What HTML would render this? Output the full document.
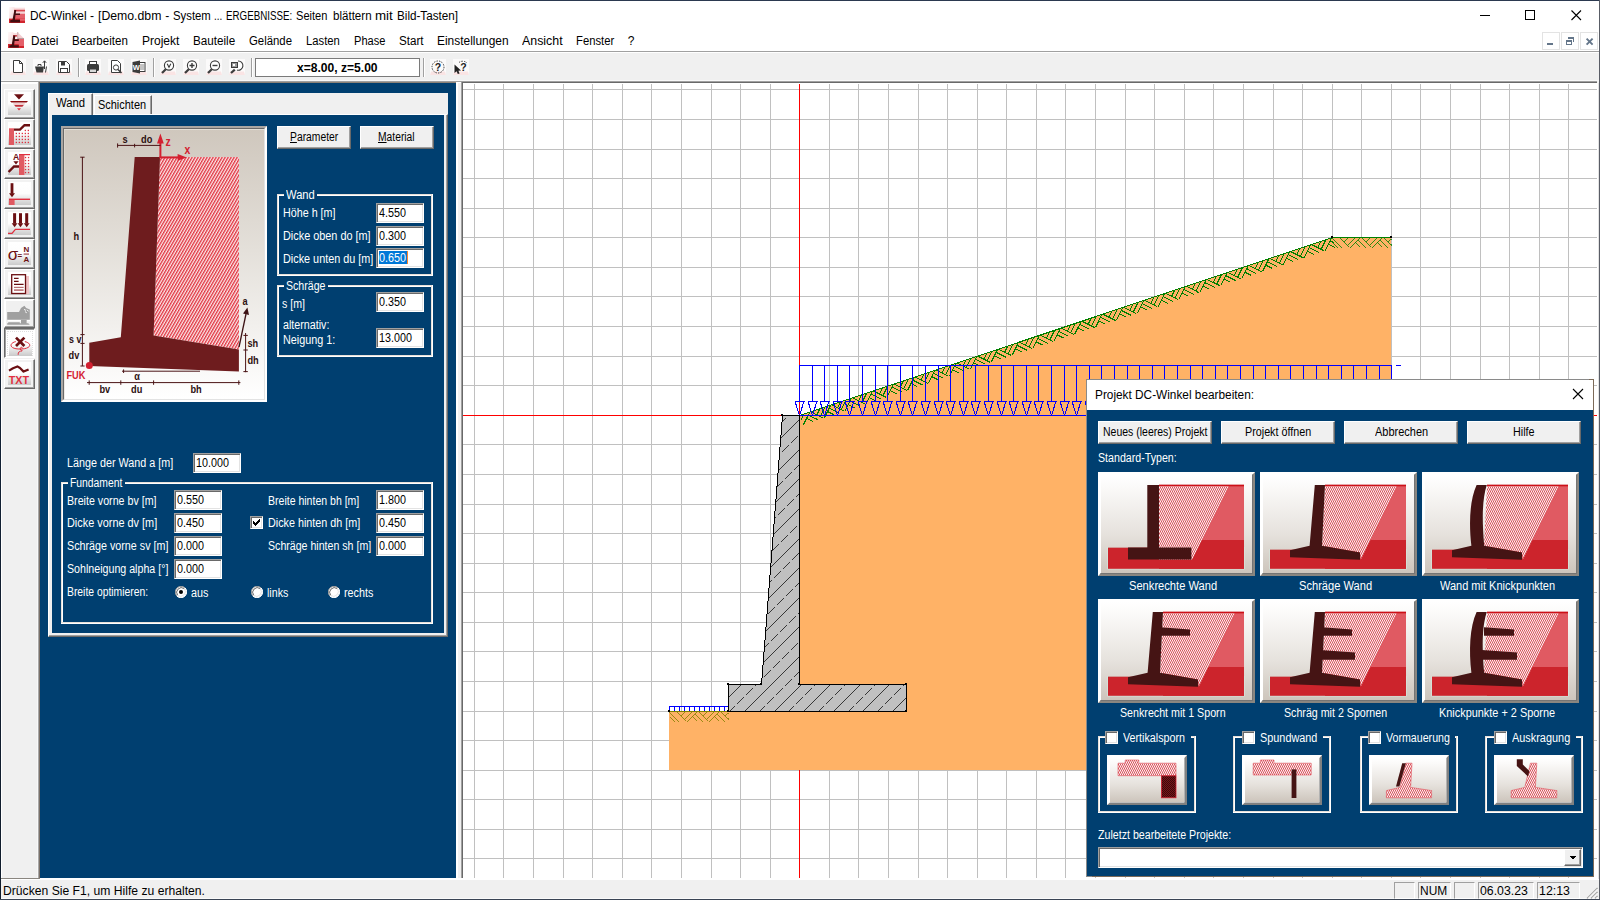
<!DOCTYPE html>
<html lang="de"><head><meta charset="utf-8"><title>DC-Winkel</title>
<style>
html,body{margin:0;padding:0}
body{width:1600px;height:900px;position:relative;overflow:hidden;background:#f0f0f0;font-family:"Liberation Sans",sans-serif;font-size:11px;color:#000}
div,span.t,svg{position:absolute}
span.t{white-space:pre;display:block;transform-origin:0 0}
svg{display:block;overflow:hidden}
.sunk{border:1px solid;border-color:#a0a0a0 #fff #fff #a0a0a0;padding:1px;box-shadow:inset 1px 1px 0 #696969,inset -1px -1px 0 #e3e3e3}
.rais{border:1px solid;border-color:#fff #696969 #696969 #fff;padding:1px;box-shadow:inset -1px -1px 0 #a0a0a0}
.etch{border:1px solid #fff;box-shadow:inset 1px 1px 0 rgba(160,160,160,.0)}
.blue{background:#003f70}
.w{color:#fff}
</style></head>
<body>
<div style="left:0px;top:0px;width:1600px;height:51px;background:#fff"></div><div style="left:0px;top:0px;width:1600px;height:1px;background:#2b3950"></div><svg style="left:9px;top:7px" width="16" height="16" viewBox="0 0 16 16"><defs><linearGradient id="ig0" x1="0" y1="0" x2="1" y2="1"><stop offset="0" stop-color="#fffafa"/><stop offset="1" stop-color="#f6d4d6"/></linearGradient></defs><rect x="0" y="0" width="5.4" height="12" fill="url(#ig0)"/><rect x="5" y="0.7" width="11" height="2" fill="#f9dfe0"/><rect x="5" y="2.7" width="11" height="2" fill="#d9464f"/><rect x="6" y="4.7" width="10" height="2" fill="#f4d3d5"/><rect x="6" y="6.7" width="10" height="6" fill="#e4606a"/><rect x="0" y="11.6" width="16" height="4.4" fill="#d0242c"/><rect x="11" y="11.6" width="5" height="2.2" fill="#e4606a"/><path d="M5.4 3H7.3L6.7 6.4H11V8H6.5L5.9 12.8H11V15.4H1.2V13.2L3.5 12.8Z" fill="#420d10"/></svg><span class="t" style="left:30.3px;top:8px;font-size:12px;line-height:16px;color:#000;transform:scaleX(0.9870);">DC-Winkel</span><span class="t" style="left:89.9px;top:8px;font-size:12px;line-height:16px;color:#000;">-</span><span class="t" style="left:98.3px;top:8px;font-size:12px;line-height:16px;color:#000;transform:scaleX(1.0221);">[Demo.dbm</span><span class="t" style="left:165.3px;top:8px;font-size:12px;line-height:16px;color:#000;">-</span><span class="t" style="left:172.7px;top:8px;font-size:12px;line-height:16px;color:#000;transform:scaleX(0.9446);">System</span><span class="t" style="left:214.3px;top:8px;font-size:12px;line-height:16px;color:#000;transform:scaleX(0.8187);">...</span><span class="t" style="left:226.3px;top:8px;font-size:12px;line-height:16px;color:#000;transform:scaleX(0.8137);">ERGEBNISSE:</span><span class="t" style="left:295.9px;top:8px;font-size:12px;line-height:16px;color:#000;transform:scaleX(0.9227);">Seiten</span><span class="t" style="left:332.7px;top:8px;font-size:12px;line-height:16px;color:#000;transform:scaleX(0.9642);">blättern</span><span class="t" style="left:375.1px;top:8px;font-size:12px;line-height:16px;color:#000;transform:scaleX(1.1125);">mit</span><span class="t" style="left:396.5px;top:8px;font-size:12px;line-height:16px;color:#000;transform:scaleX(0.9728);">Bild-Tasten]</span><svg style="left:1470px;top:1px" width="128" height="30" viewBox="0 0 128 30" shape-rendering="crispEdges"><rect x="10" y="14" width="10" height="1" fill="#000"/><rect x="55.5" y="9.5" width="9" height="9" fill="none" stroke="#000"/><path d="M101.5 9.5L111 19M111 9.5L101.5 19" stroke="#000" stroke-width="1.1" fill="none" shape-rendering="auto"/></svg><svg style="left:8px;top:32px" width="16" height="16" viewBox="0 0 16 16"><defs><linearGradient id="ig1" x1="0" y1="0" x2="1" y2="1"><stop offset="0" stop-color="#fffafa"/><stop offset="1" stop-color="#f6d4d6"/></linearGradient></defs><rect x="0" y="0" width="5.4" height="12" fill="url(#ig1)"/><rect x="5" y="1" width="4.6" height="2.2" fill="#f9dfe0"/><rect x="5" y="3" width="4.6" height="1.8" fill="#d9464f"/><rect x="6.6" y="4.8" width="3" height="2.2" fill="#fdf4f4"/><path d="M9.4 0L16 6.6H9.4Z" fill="#f3cdd0"/><rect x="9.3" y="0" width="0.9" height="6.4" fill="#c8a8ac"/><rect x="9.4" y="6" width="6.6" height="1" fill="#b89c9e"/><rect x="6" y="7" width="10" height="6" fill="#e4606a"/><rect x="0" y="12" width="16" height="4" fill="#d0242c"/><rect x="10.8" y="12" width="5.2" height="2" fill="#e4606a"/><path d="M5.3 3.6H7.4L6.9 7.2H10.8V8.9H6.6L6.1 13.2H10.8V15.4H1.4V13.4L3.7 13Z" fill="#420d10"/></svg><span class="t" style="left:30.7px;top:33px;font-size:12px;line-height:16px;color:#000;transform:scaleX(0.9780);">Datei</span><span class="t" style="left:71.9px;top:33px;font-size:12px;line-height:16px;color:#000;transform:scaleX(0.9613);">Bearbeiten</span><span class="t" style="left:141.5px;top:33px;font-size:12px;line-height:16px;color:#000;transform:scaleX(1.0011);">Projekt</span><span class="t" style="left:193.1px;top:33px;font-size:12px;line-height:16px;color:#000;transform:scaleX(0.9729);">Bauteile</span><span class="t" style="left:248.9px;top:33px;font-size:12px;line-height:16px;color:#000;transform:scaleX(0.9477);">Gelände</span><span class="t" style="left:305.9px;top:33px;font-size:12px;line-height:16px;color:#000;transform:scaleX(0.9381);">Lasten</span><span class="t" style="left:353.7px;top:33px;font-size:12px;line-height:16px;color:#000;transform:scaleX(0.9227);">Phase</span><span class="t" style="left:398.5px;top:33px;font-size:12px;line-height:16px;color:#000;transform:scaleX(0.9707);">Start</span><span class="t" style="left:436.5px;top:33px;font-size:12px;line-height:16px;color:#000;transform:scaleX(0.9936);">Einstellungen</span><span class="t" style="left:521.5px;top:33px;font-size:12px;line-height:16px;color:#000;transform:scaleX(1.0315);">Ansicht</span><span class="t" style="left:575.7px;top:33px;font-size:12px;line-height:16px;color:#000;transform:scaleX(0.9389);">Fenster</span><span class="t" style="left:627.7px;top:33px;font-size:12px;line-height:16px;color:#000;">?</span><div style="left:1542px;top:32px;width:16px;height:16px;background:#fff;border:1px solid #e3e3e3"></div><div style="left:1561px;top:32px;width:16px;height:16px;background:#fff;border:1px solid #e3e3e3"></div><div style="left:1580px;top:32px;width:16px;height:16px;background:#fff;border:1px solid #e3e3e3"></div><svg style="left:1542px;top:32px" width="56" height="18" viewBox="0 0 56 18" shape-rendering="crispEdges"><rect x="5" y="11" width="6" height="2" fill="#64768a"/><rect x="26" y="5" width="6" height="2" fill="#64768a"/><rect x="31" y="5" width="1" height="5" fill="#64768a"/><rect x="24.5" y="8.5" width="5" height="4" fill="#fff" stroke="#64768a"/><rect x="24" y="8" width="6" height="2" fill="#64768a"/><path d="M44.6 6.6L50.6 12.6M50.6 6.6L44.6 12.6" stroke="#64768a" stroke-width="1.9" fill="none" shape-rendering="auto"/></svg><div style="left:0px;top:51px;width:1600px;height:1px;background:#a0a0a0"></div><div style="left:0px;top:52px;width:1600px;height:1px;background:#fff"></div><div style="left:0px;top:53px;width:1600px;height:27px;background:#f0f0f0"></div><div style="left:0px;top:80px;width:1600px;height:1px;background:#f8f8f8"></div><div style="left:0px;top:81px;width:1597px;height:1px;background:#a0a0a0"></div><div style="left:0px;top:82px;width:40px;height:1px;background:#fff"></div><div style="left:40px;top:82px;width:416px;height:1px;background:#8c8278"></div><div style="left:456px;top:82px;width:5px;height:1px;background:#fff"></div><div style="left:461px;top:82px;width:1136px;height:1px;background:#696969"></div><div style="left:1597px;top:81px;width:2px;height:2px;background:#f4f4f4"></div><div style="left:78px;top:58px;width:1px;height:19px;background:#a0a0a0"></div><div style="left:79px;top:58px;width:1px;height:19px;background:#fff"></div><div style="left:153px;top:58px;width:1px;height:19px;background:#a0a0a0"></div><div style="left:154px;top:58px;width:1px;height:19px;background:#fff"></div><div style="left:251px;top:58px;width:1px;height:19px;background:#a0a0a0"></div><div style="left:252px;top:58px;width:1px;height:19px;background:#fff"></div><div style="left:423px;top:58px;width:1px;height:19px;background:#a0a0a0"></div><div style="left:424px;top:58px;width:1px;height:19px;background:#fff"></div><div style="left:255px;top:58px;width:163px;height:17px;background:#fff;border:1px solid #7a7a7a"></div><span class="t" style="left:296.7px;top:60px;font-size:12px;line-height:16px;color:#000;font-weight:700;transform:scaleX(1.0065);">x=8.00, z=5.00</span>
<svg style="left:10px;top:59px" width="16" height="16" viewBox="0 0 16 16"><rect width="16" height="16" fill="#fbfafa"/><path d="M0 16L1 12.5H15L16 16Z" fill="#fae4e4"/><path d="M3.5 1.5H9.5L12.5 4.5V13.5H3.5Z" fill="#fff" stroke="#3c3c3c"/><path d="M9.5 1.5V4.5H12.5" fill="none" stroke="#3c3c3c"/></svg><svg style="left:33px;top:59px" width="16" height="16" viewBox="0 0 16 16"><rect width="16" height="16" fill="#fbfafa"/><path d="M0 16L1 12.5H15L16 16Z" fill="#fae4e4"/><path d="M2 7.5H11L10 13.5H3.5Z" fill="#3c3c3c"/><path d="M5 7V5.5H8V7" stroke="#3c3c3c" fill="none"/><path d="M11.5 2V10M9.8 3.8L11.5 1.8L13.2 3.8M13.5 7.5L12.5 13.5" stroke="#3c3c3c" fill="none"/></svg><svg style="left:56px;top:59px" width="16" height="16" viewBox="0 0 16 16"><rect width="16" height="16" fill="#fbfafa"/><path d="M0 16L1 12.5H15L16 16Z" fill="#fae4e4"/><path d="M2.5 2.5H10.5L13.5 5.5V13.5H2.5Z" fill="#fff" stroke="#3c3c3c"/><rect x="5" y="3" width="4" height="3.5" fill="#3c3c3c"/><rect x="4.5" y="9.5" width="7" height="4" fill="#fff" stroke="#3c3c3c"/></svg><svg style="left:85px;top:59px" width="16" height="16" viewBox="0 0 16 16"><rect width="16" height="16" fill="#fbfafa"/><path d="M0 16L1 12.5H15L16 16Z" fill="#fae4e4"/><rect x="4.5" y="2.5" width="7" height="3" fill="#fff" stroke="#3c3c3c"/><rect x="2" y="5" width="12" height="7" rx="1.5" fill="#3c3c3c"/><rect x="4.5" y="10" width="7" height="3.5" fill="#d8d8d8" stroke="#3c3c3c"/></svg><svg style="left:108px;top:59px" width="16" height="16" viewBox="0 0 16 16"><rect width="16" height="16" fill="#fbfafa"/><path d="M0 16L1 12.5H15L16 16Z" fill="#fae4e4"/><path d="M3.5 1.5H9.5L12.5 4.5V13.5H3.5Z" fill="#fff" stroke="#3c3c3c"/><circle cx="8" cy="8.5" r="2.6" fill="#fff" stroke="#3c3c3c"/><path d="M10 10.5L13.5 14" stroke="#3c3c3c" stroke-width="1.6"/></svg><svg style="left:131px;top:59px" width="16" height="16" viewBox="0 0 16 16"><rect width="16" height="16" fill="#fbfafa"/><path d="M0 16L1 12.5H15L16 16Z" fill="#fae4e4"/><rect x="8" y="3.5" width="6" height="9" fill="#fff" stroke="#3c3c3c"/><path d="M9 6H13M9 8H13M9 10H13" stroke="#888"/><path d="M1.5 3L9 1.5V14.5L1.5 13Z" fill="#3c3c3c"/><text x="5.2" y="11" font-family="Liberation Sans,sans-serif" font-size="7.5" font-weight="700" fill="#fff" text-anchor="middle">W</text></svg><svg style="left:160px;top:59px" width="16" height="16" viewBox="0 0 16 16"><rect width="16" height="16" fill="#fbfafa"/><path d="M0 16L1 12.5H15L16 16Z" fill="#fae4e4"/><circle cx="9" cy="6.5" r="4.6" fill="#fff" stroke="#3c3c3c" stroke-width="1.1"/><path d="M5.8 10.2L2 14" stroke="#3c3c3c" stroke-width="2.2"/><path d="M7.2 4.8L9 8.2L10.8 4.8" stroke="#3c3c3c" fill="none" stroke-width="1.1"/></svg><svg style="left:183px;top:59px" width="16" height="16" viewBox="0 0 16 16"><rect width="16" height="16" fill="#fbfafa"/><path d="M0 16L1 12.5H15L16 16Z" fill="#fae4e4"/><circle cx="9" cy="6.5" r="4.6" fill="#fff" stroke="#3c3c3c" stroke-width="1.1"/><path d="M5.8 10.2L2 14" stroke="#3c3c3c" stroke-width="2.2"/><path d="M6.5 6.5H11.5M9 4V9" stroke="#3c3c3c" fill="none" stroke-width="1.4"/></svg><svg style="left:206px;top:59px" width="16" height="16" viewBox="0 0 16 16"><rect width="16" height="16" fill="#fbfafa"/><path d="M0 16L1 12.5H15L16 16Z" fill="#fae4e4"/><circle cx="9" cy="6.5" r="4.6" fill="#fff" stroke="#3c3c3c" stroke-width="1.1"/><path d="M5.8 10.2L2 14" stroke="#3c3c3c" stroke-width="2.2"/><path d="M6.5 6.5H11.5" stroke="#3c3c3c" fill="none" stroke-width="1.4"/></svg><svg style="left:229px;top:59px" width="16" height="16" viewBox="0 0 16 16"><rect width="16" height="16" fill="#fbfafa"/><path d="M0 16L1 12.5H15L16 16Z" fill="#fae4e4"/><path d="M9 2A4.6 4.6 0 1 1 8 11" fill="#fff" stroke="#3c3c3c" stroke-width="1.1"/><rect x="2.5" y="3.5" width="6" height="5" fill="#999" stroke="#3c3c3c"/><rect x="4" y="5" width="2" height="2" fill="#fff"/><path d="M5.8 10.6L2 14" stroke="#3c3c3c" stroke-width="2.2"/></svg><svg style="left:430px;top:59px" width="16" height="16" viewBox="0 0 16 16"><rect width="16" height="16" fill="#fbfafa"/><path d="M0 16L1 12.5H15L16 16Z" fill="#fae4e4"/><circle cx="8" cy="8" r="6" fill="none" stroke="#3c3c3c" stroke-width="1" stroke-dasharray="1.4 1.2"/><text x="8" y="11.6" font-family="Liberation Sans,sans-serif" font-size="10.5" font-weight="700" fill="#222" text-anchor="middle">?</text></svg><svg style="left:453px;top:59px" width="16" height="16" viewBox="0 0 16 16"><rect width="16" height="16" fill="#fbfafa"/><path d="M0 16L1 12.5H15L16 16Z" fill="#fae4e4"/><path d="M6 3.5A6 6 0 0 1 14 4" fill="none" stroke="#3c3c3c" stroke-width="1" stroke-dasharray="1.4 1.2"/><path d="M1.5 6L8 12L5.4 12.2L6.6 15L4.8 15.6L3.6 12.8L1.5 14.5Z" fill="#222" transform="translate(0,-0.5)"/><text x="10.5" y="12.4" font-family="Liberation Sans,sans-serif" font-size="10.5" font-weight="700" fill="#222" text-anchor="middle">?</text></svg>
<div style="left:1px;top:83px;width:37px;height:795px;background:#f0f0f0"></div><div style="left:1px;top:83px;width:38px;height:1px;background:#fff"></div><div style="left:1px;top:83px;width:1px;height:795px;background:#fff"></div><div style="left:37px;top:83px;width:1px;height:795px;background:#f8f8f8"></div><div style="left:38px;top:82px;width:1px;height:796px;background:#a8a8a8"></div><div style="left:39px;top:82px;width:1px;height:796px;background:#7a7068"></div><div style="left:1px;top:878px;width:39px;height:1px;background:#a0a0a0"></div><div style="left:4px;top:89px;width:29px;height:28px;background:#f2f2f2;border:1px solid;border-color:#fff #696969 #696969 #fff;box-shadow:inset -1px -1px 0 #a0a0a0"></div><div style="left:4px;top:119px;width:29px;height:28px;background:#f2f2f2;border:1px solid;border-color:#fff #696969 #696969 #fff;box-shadow:inset -1px -1px 0 #a0a0a0"></div><div style="left:4px;top:149px;width:29px;height:28px;background:#f2f2f2;border:1px solid;border-color:#fff #696969 #696969 #fff;box-shadow:inset -1px -1px 0 #a0a0a0"></div><div style="left:4px;top:179px;width:29px;height:28px;background:#f2f2f2;border:1px solid;border-color:#fff #696969 #696969 #fff;box-shadow:inset -1px -1px 0 #a0a0a0"></div><div style="left:4px;top:209px;width:29px;height:28px;background:#f2f2f2;border:1px solid;border-color:#fff #696969 #696969 #fff;box-shadow:inset -1px -1px 0 #a0a0a0"></div><div style="left:4px;top:239px;width:29px;height:28px;background:#f2f2f2;border:1px solid;border-color:#fff #696969 #696969 #fff;box-shadow:inset -1px -1px 0 #a0a0a0"></div><div style="left:4px;top:269px;width:29px;height:28px;background:#f2f2f2;border:1px solid;border-color:#fff #696969 #696969 #fff;box-shadow:inset -1px -1px 0 #a0a0a0"></div><div style="left:4px;top:299px;width:29px;height:27px;background:#f0f0f0;border:1px solid;border-color:#fff #696969 #696969 #fff;box-shadow:inset -1px -1px 0 #a0a0a0,inset 1px 1px 0 #fff"></div><div style="left:4px;top:328px;width:29px;height:28px;background:#fff;border:1px solid;border-color:#696969 #fff #fff #696969;box-shadow:inset 1px 1px 0 #a0a0a0"></div><div style="left:7px;top:331px;width:25px;height:24px;border:1px dotted #dedede;width:24px;height:23px"></div><div style="left:4px;top:359px;width:29px;height:28px;background:#f2f2f2;border:1px solid;border-color:#fff #696969 #696969 #fff;box-shadow:inset -1px -1px 0 #a0a0a0"></div><svg style="left:0;top:83px;opacity:.999" width="40" height="320" viewBox="0 83 40 320"><defs><linearGradient id="tbg" x1="0" y1="0" x2="0" y2="1"><stop offset="0" stop-color="#fff"/><stop offset="0.5" stop-color="#fdfdfd"/><stop offset="1" stop-color="#cacaca"/></linearGradient></defs><rect x="8" y="92" width="23" height="23" fill="url(#tbg)"/><path d="M14 94.2H24L19 99.4Z" fill="#6b0f12"/><path d="M10 101H28L26.6 102.6H11.4Z" fill="#8b0a0e"/><path d="M13 103.6H25L24.2 104.6H13.8Z" fill="#e89a9e"/><path d="M14.2 105.1H23.8L22.4 106.8H15.6Z" fill="#c0303a"/><path d="M17 108.2H21L19 110.4Z" fill="#e03040"/><rect x="8" y="122" width="23" height="23" fill="url(#tbg)"/><rect x="9" y="128" width="5" height="17" fill="#e05a62"/><rect x="9" y="128" width="5" height="1" fill="#f08890"/><path d="M14 129.6H20L24.5 125.2H30" stroke="#6b0f12" stroke-width="2.4" fill="none"/><rect x="15.7" y="132.8" width="1.3" height="1.3" fill="#e03040"/><rect x="15.7" y="135.8" width="1.3" height="1.3" fill="#e03040"/><rect x="15.7" y="138.8" width="1.3" height="1.3" fill="#e03040"/><rect x="15.7" y="141.8" width="1.3" height="1.3" fill="#e03040"/><rect x="18.7" y="132.8" width="1.3" height="1.3" fill="#e03040"/><rect x="18.7" y="135.8" width="1.3" height="1.3" fill="#e03040"/><rect x="18.7" y="138.8" width="1.3" height="1.3" fill="#e03040"/><rect x="18.7" y="141.8" width="1.3" height="1.3" fill="#e03040"/><rect x="21.7" y="132.8" width="1.3" height="1.3" fill="#e03040"/><rect x="21.7" y="135.8" width="1.3" height="1.3" fill="#e03040"/><rect x="21.7" y="138.8" width="1.3" height="1.3" fill="#e03040"/><rect x="21.7" y="141.8" width="1.3" height="1.3" fill="#e03040"/><rect x="24.7" y="132.8" width="1.3" height="1.3" fill="#e03040"/><rect x="24.7" y="135.8" width="1.3" height="1.3" fill="#e03040"/><rect x="24.7" y="138.8" width="1.3" height="1.3" fill="#e03040"/><rect x="24.7" y="141.8" width="1.3" height="1.3" fill="#e03040"/><rect x="27.7" y="132.8" width="1.3" height="1.3" fill="#e03040"/><rect x="27.7" y="135.8" width="1.3" height="1.3" fill="#e03040"/><rect x="27.7" y="138.8" width="1.3" height="1.3" fill="#e03040"/><rect x="27.7" y="141.8" width="1.3" height="1.3" fill="#e03040"/><rect x="24.7" y="129.8" width="1.3" height="1.3" fill="#e03040"/><rect x="27.7" y="129.8" width="1.3" height="1.3" fill="#e03040"/><rect x="8" y="152" width="23" height="23" fill="url(#tbg)"/><rect x="19" y="154" width="5.4" height="21" fill="#e05a62"/><rect x="19" y="154" width="11" height="1.2" fill="#e03040"/><path d="M19 166.5H14L8.6 172" stroke="#6b0f12" stroke-width="2.4" fill="none"/><path d="M13.4 161.2H18.6L16 164.6Z" fill="#6b0f12"/><text x="16" y="159.6" font-family="Liberation Sans,sans-serif" font-size="8.6" font-weight="700" fill="#6b0f12" text-anchor="middle">A</text><rect x="24.9" y="156.9" width="1.3" height="1.3" fill="#e03040"/><rect x="24.9" y="159.9" width="1.3" height="1.3" fill="#e03040"/><rect x="24.9" y="162.9" width="1.3" height="1.3" fill="#e03040"/><rect x="24.9" y="165.9" width="1.3" height="1.3" fill="#e03040"/><rect x="24.9" y="168.9" width="1.3" height="1.3" fill="#e03040"/><rect x="24.9" y="171.9" width="1.3" height="1.3" fill="#e03040"/><rect x="27.9" y="156.9" width="1.3" height="1.3" fill="#e03040"/><rect x="27.9" y="159.9" width="1.3" height="1.3" fill="#e03040"/><rect x="27.9" y="162.9" width="1.3" height="1.3" fill="#e03040"/><rect x="27.9" y="165.9" width="1.3" height="1.3" fill="#e03040"/><rect x="27.9" y="168.9" width="1.3" height="1.3" fill="#e03040"/><rect x="27.9" y="171.9" width="1.3" height="1.3" fill="#e03040"/><rect x="8" y="182" width="23" height="23" fill="url(#tbg)"/><rect x="10.6" y="183.2" width="2.8" height="10.6" fill="#6b0f12"/><path d="M9 193.2H15L12 197.2Z" fill="#6b0f12"/><rect x="9" y="198.6" width="21" height="1.4" fill="#e03040"/><rect x="9" y="200" width="5.6" height="5" fill="#e05a62"/><rect x="8" y="212" width="23" height="23" fill="url(#tbg)"/><rect x="13.1" y="213.2" width="3" height="10.4" fill="#6b0f12"/><path d="M11.7 223.2H17.5L14.6 227.2Z" fill="#6b0f12"/><rect x="19.0" y="213.2" width="3" height="10.4" fill="#6b0f12"/><path d="M17.6 223.2H23.4L20.5 227.2Z" fill="#6b0f12"/><rect x="25.2" y="213.2" width="3" height="10.4" fill="#6b0f12"/><path d="M23.8 223.2H29.599999999999998L26.7 227.2Z" fill="#6b0f12"/><path d="M8 233.4H12L15.4 229.3H30" stroke="#e03040" stroke-width="1.3" fill="none"/><rect x="8" y="242" width="23" height="23" fill="url(#tbg)"/><text x="13" y="259.6" font-family="Liberation Sans,sans-serif" font-size="17" fill="#6b0f12" text-anchor="middle">σ</text><text x="19.9" y="257.6" font-family="Liberation Sans,sans-serif" font-size="8" font-weight="700" fill="#6b0f12" text-anchor="middle">=</text><text x="26.4" y="251.8" font-family="Liberation Sans,sans-serif" font-size="8" font-weight="700" fill="#6b0f12" text-anchor="middle">N</text><rect x="23.6" y="253.4" width="5.4" height="1.4" fill="#b06468"/><text x="26.3" y="261.8" font-family="Liberation Sans,sans-serif" font-size="8" font-weight="700" fill="#6b0f12" text-anchor="middle">A</text><rect x="8" y="272" width="23" height="23" fill="url(#tbg)"/><rect x="26" y="276" width="3" height="18" fill="#f0c4c6"/><rect x="11.7" y="274.7" width="13.8" height="18.8" fill="#fff" stroke="#6b0f12" stroke-width="1.3"/><path d="M14 278.4H18.6M14 281.4H18.6M14 284.4H23.6" stroke="#6b0f12" stroke-width="1.1"/><path d="M14 287.4H23.6" stroke="#b87074" stroke-width="1.2"/><path d="M14 290.1H23.6" stroke="#b87074" stroke-width="1.6"/><path d="M7.2 312H19L21 308L24.4 305.8L26.2 308L29.8 309.4V319.8H7.2Z" fill="#a0a0a0"/><rect x="21" y="319.8" width="5.6" height="4" fill="#a0a0a0"/><path d="M7.2 324.8V323.4L8.6 322.2H19.8V323.2H28.2L29.8 324.8Z" fill="#a0a0a0"/><path d="M8 320.6H21M27 320.6H30" stroke="#fff" stroke-width="1.4"/><path d="M24 309.4L26 310.4M25 311.6L26.8 312.8M27 309.8L28.6 311.4" stroke="#fff" stroke-width="0.9"/><rect x="9" y="333" width="23" height="23" fill="url(#tbg)"/><path d="M15.8 341.6C11 342.6 9.6 345.8 12.6 347.6C16 349.6 24.6 349.6 28.2 347.4C31.4 345.4 29.4 342.6 24.8 341.6" stroke="#e03040" stroke-width="1" fill="none"/><path d="M22.4 348.6C22.8 346.6 19.8 347 20.2 349C20.6 350.8 23 350 22 351C20 351 17.6 352 18.2 354.8" stroke="#e03040" stroke-width="1" fill="none"/><path d="M16 337.6L24.4 346M24.4 337.6L16 346" stroke="#6b0f12" stroke-width="2.7" fill="none"/><rect x="8" y="362" width="23" height="23" fill="url(#tbg)"/><path d="M9 370.6L13 368.2L17.4 366.4L20 368L23.6 371.6L28.6 369.4" stroke="#6b0f12" stroke-width="2.2" fill="none" stroke-linejoin="round"/><text x="18.9" y="383.8" font-family="Liberation Sans,sans-serif" font-size="11.4" font-weight="700" fill="#e03040" text-anchor="middle" textLength="20.4" lengthAdjust="spacingAndGlyphs">TXT</text></svg>
<div style="left:40px;top:83px;width:416px;height:795px;background:#003f70"></div><div style="left:48px;top:93px;width:400px;height:22px;background:#f0f0f0"></div><div style="left:48px;top:114px;width:398px;height:521px;background:#f0f0f0;border:1px solid;border-color:#fff #696969 #696969 #fff;box-shadow:inset -1px -1px 0 #a0a0a0"></div><div style="left:52px;top:115px;width:392px;height:518px;background:#003f70"></div><div style="left:48px;top:93px;width:43px;height:21px;background:#f0f0f0;border:1px solid;border-color:#fff #696969 #f0f0f0 #fff;border-bottom:0;box-shadow:inset -1px 0 0 #a0a0a0"></div><div style="left:94px;top:95px;width:56px;height:18px;background:#f0f0f0;border:1px solid;border-color:#fff #696969 #f0f0f0 #fff;border-bottom:0;box-shadow:inset -1px 0 0 #a0a0a0"></div><span class="t" style="left:55.5px;top:95px;font-size:12px;line-height:16px;color:#000;transform:scaleX(0.9416);">Wand</span><span class="t" style="left:97.5px;top:97px;font-size:12px;line-height:16px;color:#000;transform:scaleX(0.9127);">Schichten</span><div style="left:61px;top:126px;width:202px;height:272px;border:2px solid;border-color:#aaa6a2 #fff #fff #aaa6a2"></div><div style="left:63px;top:128px;width:200px;height:270px;border:1px solid;border-color:#696969 #e3e3e3 #e3e3e3 #696969;background:#fff"></div><svg style="left:64px;top:129px" width="200" height="270" viewBox="64 129 200 270"><defs><linearGradient id="dg" x1="0" y1="0" x2="0" y2="1"><stop offset="0" stop-color="#cfc7bd"/><stop offset="0.45" stop-color="#e4e0da"/><stop offset="1" stop-color="#ffffff"/></linearGradient><pattern id="dh" width="2.6" height="8" patternUnits="userSpaceOnUse" patternTransform="rotate(30 0 0)"><rect width="2.6" height="8" fill="#fbe9ea"/><rect width="1.3" height="8" fill="#e0323e"/></pattern></defs><rect x="64" y="129" width="200" height="270" fill="url(#dg)"/><rect x="64" y="129" width="200" height="1" fill="#e2ded6"/><rect x="64" y="129" width="1" height="270" fill="#e2ded6" opacity=".6"/><polygon points="160,157 239,157 239,349.5 153.6,335.6" fill="url(#dh)"/><polygon points="134.7,157 160,157 153.6,335.6 238.9,349.5 238.9,371.6 89.3,366 89.3,342.8 120.8,337.2" fill="#6e1c1e"/><path d="M160.4 157.6V142" stroke="#d42030" stroke-width="2" fill="none"/><path d="M157 143.6L160.4 133.6L163.8 143.6Z" fill="#d42030"/><path d="M159.4 157.4H179" stroke="#d42030" stroke-width="2" fill="none"/><path d="M177.6 154L186.8 157.4L177.6 160.8Z" fill="#d42030"/><path d="M117.4 145.4H160.5M117.6 143.4V147.6M134.6 143.8V147.4M82.4 157V366M80.2 157.2H84.6M80.4 334.6H84.6M80.4 343.4H84.6M80.4 366H84.6M245.6 333V372.2M243.4 335.4H247.8M243.4 350H247.8M243.4 371.6H247.8M87 382.6H240.4M89.2 380.4V384.8M120.8 380.4V384.8M153.6 380.4V384.8M238.8 380.4V384.8M122 371.2H200M123.6 369.4V373" stroke="#4a1416" stroke-width="1" fill="none"/><path d="M239 347L246 314" stroke="#3c1214" stroke-width="1.3" fill="none"/><path d="M243 313.4L247.4 307.4L249 315Z" fill="#3c1214"/><circle cx="89.3" cy="365.6" r="3.5" fill="#d22030"/><text transform="translate(122.6,143.2) scale(0.87,1)" font-family="Liberation Sans,sans-serif" font-weight="700" font-size="10.6" fill="#2c1010" text-anchor="start">s</text><text transform="translate(141,143.2) scale(0.87,1)" font-family="Liberation Sans,sans-serif" font-weight="700" font-size="10.6" fill="#2c1010" text-anchor="start">do</text><text transform="translate(165.4,145.8) scale(0.87,1)" font-family="Liberation Sans,sans-serif" font-weight="700" font-size="12" fill="#d42030" text-anchor="start">z</text><text transform="translate(184.6,154) scale(0.87,1)" font-family="Liberation Sans,sans-serif" font-weight="700" font-size="12" fill="#d42030" text-anchor="start">x</text><text transform="translate(73.4,239.8) scale(0.87,1)" font-family="Liberation Sans,sans-serif" font-weight="700" font-size="10.6" fill="#2c1010" text-anchor="start">h</text><text transform="translate(242.4,304.6) scale(0.87,1)" font-family="Liberation Sans,sans-serif" font-weight="700" font-size="10.6" fill="#2c1010" text-anchor="start">a</text><text transform="translate(69,343.4) scale(0.87,1)" font-family="Liberation Sans,sans-serif" font-weight="700" font-size="10.2" fill="#2c1010" text-anchor="start">s v</text><text transform="translate(68.6,359) scale(0.87,1)" font-family="Liberation Sans,sans-serif" font-weight="700" font-size="10.6" fill="#2c1010" text-anchor="start">dv</text><text transform="translate(247.4,346.8) scale(0.87,1)" font-family="Liberation Sans,sans-serif" font-weight="700" font-size="10.6" fill="#2c1010" text-anchor="start">sh</text><text transform="translate(247.4,363.6) scale(0.87,1)" font-family="Liberation Sans,sans-serif" font-weight="700" font-size="10.6" fill="#2c1010" text-anchor="start">dh</text><text transform="translate(66.4,378.6) scale(0.87,1)" font-family="Liberation Sans,sans-serif" font-weight="700" font-size="10.6" fill="#d42030" text-anchor="start">FUK</text><text transform="translate(134.2,380) scale(0.87,1)" font-family="Liberation Sans,sans-serif" font-weight="700" font-size="10.6" fill="#2c1010" text-anchor="start">α</text><text transform="translate(99.4,393.4) scale(0.87,1)" font-family="Liberation Sans,sans-serif" font-weight="700" font-size="10.6" fill="#2c1010" text-anchor="start">bv</text><text transform="translate(131,393.4) scale(0.87,1)" font-family="Liberation Sans,sans-serif" font-weight="700" font-size="10.6" fill="#2c1010" text-anchor="start">du</text><text transform="translate(190.4,393.4) scale(0.87,1)" font-family="Liberation Sans,sans-serif" font-weight="700" font-size="10.6" fill="#2c1010" text-anchor="start">bh</text></svg><div class="rais" style="left:277px;top:126px;width:70px;height:19px;background:#f0f0f0;"></div><span class="t" style="left:289.7px;top:129px;font-size:12px;line-height:16px;color:#000;transform:scaleX(0.8602);"><u>P</u>arameter</span><div class="rais" style="left:360px;top:126px;width:70px;height:19px;background:#f0f0f0;"></div><span class="t" style="left:377.8px;top:129px;font-size:12px;line-height:16px;color:#000;transform:scaleX(0.8574);"><u>M</u>aterial</span><div style="left:277px;top:194px;width:7px;height:1px;background:#e6e0da"></div><div style="left:278px;top:195px;width:6px;height:1px;background:#fff"></div><div style="left:317px;top:194px;width:115px;height:1px;background:#e6e0da"></div><div style="left:317px;top:195px;width:114px;height:1px;background:#fff"></div><div style="left:277px;top:194px;width:1px;height:81px;background:#e6e0da"></div><div style="left:278px;top:195px;width:1px;height:79px;background:#fff"></div><div style="left:278px;top:274px;width:154px;height:1px;background:#e6e0da"></div><div style="left:431px;top:195px;width:1px;height:80px;background:#e6e0da"></div><div style="left:277px;top:275px;width:156px;height:1px;background:#fff"></div><div style="left:432px;top:194px;width:1px;height:82px;background:#fff"></div><span class="t" style="left:285.7px;top:187px;font-size:12px;line-height:16px;color:#fff;transform:scaleX(0.9319);">Wand</span><span class="t" style="left:282.7px;top:205px;font-size:12px;line-height:16px;color:#fff;transform:scaleX(0.8943);">Höhe h [m]</span><span class="t" style="left:282.7px;top:228px;font-size:12px;line-height:16px;color:#fff;transform:scaleX(0.9057);">Dicke oben do [m]</span><span class="t" style="left:282.7px;top:251px;font-size:12px;line-height:16px;color:#fff;transform:scaleX(0.9034);">Dicke unten du [m]</span><div class="sunk" style="left:376px;top:203px;width:44px;height:16px;background:#fff"></div><span class="t" style="left:378.7px;top:205px;font-size:12px;line-height:16px;color:#000;transform:scaleX(0.8991);">4.550</span><div class="sunk" style="left:376px;top:226px;width:44px;height:16px;background:#fff"></div><span class="t" style="left:378.7px;top:228px;font-size:12px;line-height:16px;color:#000;transform:scaleX(0.8991);">0.300</span><div class="sunk" style="left:376px;top:248px;width:44px;height:16px;background:#fff"></div><div style="left:379px;top:251px;width:28px;height:13px;background:#0078d7"></div><div style="left:407px;top:251px;width:1px;height:13px;background:#ff8728"></div><span class="t" style="left:378.7px;top:250px;font-size:12px;line-height:16px;color:#fff;transform:scaleX(0.8991);">0.650</span><div style="left:277px;top:285px;width:7px;height:1px;background:#e6e0da"></div><div style="left:278px;top:286px;width:6px;height:1px;background:#fff"></div><div style="left:328px;top:285px;width:104px;height:1px;background:#e6e0da"></div><div style="left:328px;top:286px;width:103px;height:1px;background:#fff"></div><div style="left:277px;top:285px;width:1px;height:71px;background:#e6e0da"></div><div style="left:278px;top:286px;width:1px;height:69px;background:#fff"></div><div style="left:278px;top:355px;width:154px;height:1px;background:#e6e0da"></div><div style="left:431px;top:286px;width:1px;height:70px;background:#e6e0da"></div><div style="left:277px;top:356px;width:156px;height:1px;background:#fff"></div><div style="left:432px;top:285px;width:1px;height:72px;background:#fff"></div><span class="t" style="left:286.1px;top:278px;font-size:12px;line-height:16px;color:#fff;transform:scaleX(0.8836);">Schräge</span><span class="t" style="left:282.3px;top:296px;font-size:12px;line-height:16px;color:#fff;transform:scaleX(0.8846);">s [m]</span><span class="t" style="left:282.5px;top:317px;font-size:12px;line-height:16px;color:#fff;transform:scaleX(0.8918);">alternativ:</span><span class="t" style="left:282.9px;top:332px;font-size:12px;line-height:16px;color:#fff;transform:scaleX(0.8993);">Neigung 1:</span><div class="sunk" style="left:376px;top:292px;width:44px;height:16px;background:#fff"></div><span class="t" style="left:378.7px;top:294px;font-size:12px;line-height:16px;color:#000;transform:scaleX(0.8991);">0.350</span><div class="sunk" style="left:376px;top:328px;width:44px;height:16px;background:#fff"></div><span class="t" style="left:378.7px;top:330px;font-size:12px;line-height:16px;color:#000;transform:scaleX(0.8958);">13.000</span><span class="t" style="left:66.8px;top:455px;font-size:12px;line-height:16px;color:#fff;transform:scaleX(0.8986);">Länge der Wand a [m]</span><div class="sunk" style="left:193px;top:453px;width:44px;height:16px;background:#fff"></div><span class="t" style="left:195.7px;top:455px;font-size:12px;line-height:16px;color:#000;transform:scaleX(0.8958);">10.000</span><div style="left:61px;top:482px;width:7px;height:1px;background:#e6e0da"></div><div style="left:62px;top:483px;width:6px;height:1px;background:#fff"></div><div style="left:125px;top:482px;width:307px;height:1px;background:#e6e0da"></div><div style="left:125px;top:483px;width:306px;height:1px;background:#fff"></div><div style="left:61px;top:482px;width:1px;height:141px;background:#e6e0da"></div><div style="left:62px;top:483px;width:1px;height:139px;background:#fff"></div><div style="left:62px;top:622px;width:370px;height:1px;background:#e6e0da"></div><div style="left:431px;top:483px;width:1px;height:140px;background:#e6e0da"></div><div style="left:61px;top:623px;width:372px;height:1px;background:#fff"></div><div style="left:432px;top:482px;width:1px;height:142px;background:#fff"></div><span class="t" style="left:70.0px;top:475px;font-size:12px;line-height:16px;color:#fff;transform:scaleX(0.8632);">Fundament</span><span class="t" style="left:66.8px;top:493px;font-size:12px;line-height:16px;color:#fff;transform:scaleX(0.8886);">Breite vorne bv [m]</span><div class="sunk" style="left:174px;top:490px;width:44px;height:16px;background:#fff"></div><span class="t" style="left:176.7px;top:492px;font-size:12px;line-height:16px;color:#000;transform:scaleX(0.8991);">0.550</span><span class="t" style="left:66.8px;top:515px;font-size:12px;line-height:16px;color:#fff;transform:scaleX(0.9077);">Dicke vorne dv [m]</span><div class="sunk" style="left:174px;top:513px;width:44px;height:16px;background:#fff"></div><span class="t" style="left:176.7px;top:515px;font-size:12px;line-height:16px;color:#000;transform:scaleX(0.8991);">0.450</span><span class="t" style="left:66.8px;top:538px;font-size:12px;line-height:16px;color:#fff;transform:scaleX(0.8943);">Schräge vorne sv [m]</span><div class="sunk" style="left:174px;top:536px;width:44px;height:16px;background:#fff"></div><span class="t" style="left:176.7px;top:538px;font-size:12px;line-height:16px;color:#000;transform:scaleX(0.8991);">0.000</span><span class="t" style="left:66.8px;top:561px;font-size:12px;line-height:16px;color:#fff;transform:scaleX(0.8876);">Sohlneigung alpha [°]</span><div class="sunk" style="left:174px;top:559px;width:44px;height:16px;background:#fff"></div><span class="t" style="left:176.7px;top:561px;font-size:12px;line-height:16px;color:#000;transform:scaleX(0.8991);">0.000</span><span class="t" style="left:267.9px;top:493px;font-size:12px;line-height:16px;color:#fff;transform:scaleX(0.8774);">Breite hinten bh [m]</span><div class="sunk" style="left:376px;top:490px;width:44px;height:16px;background:#fff"></div><span class="t" style="left:378.7px;top:492px;font-size:12px;line-height:16px;color:#000;transform:scaleX(0.8991);">1.800</span><span class="t" style="left:267.9px;top:515px;font-size:12px;line-height:16px;color:#fff;transform:scaleX(0.8986);">Dicke hinten dh [m]</span><div class="sunk" style="left:376px;top:513px;width:44px;height:16px;background:#fff"></div><span class="t" style="left:378.7px;top:515px;font-size:12px;line-height:16px;color:#000;transform:scaleX(0.8991);">0.450</span><span class="t" style="left:267.9px;top:538px;font-size:12px;line-height:16px;color:#fff;transform:scaleX(0.8841);">Schräge hinten sh [m]</span><div class="sunk" style="left:376px;top:536px;width:44px;height:16px;background:#fff"></div><span class="t" style="left:378.7px;top:538px;font-size:12px;line-height:16px;color:#000;transform:scaleX(0.8991);">0.000</span><div class="sunk" style="left:250px;top:516px;width:9px;height:9px;background:#fff"></div><svg style="left:250px;top:516px" width="13" height="13" viewBox="0 0 13 13" shape-rendering="crispEdges"><path d="M3 5v3l2 2l5-5v-3l-5 5z" fill="#000"/></svg><span class="t" style="left:66.8px;top:584px;font-size:12px;line-height:16px;color:#fff;transform:scaleX(0.8623);">Breite optimieren:</span><svg style="left:175px;top:586px" width="12" height="12" viewBox="0 0 12 12"><circle cx="6" cy="6" r="5.5" fill="#fff"/><path d="M1.9 10.1A5.8 5.8 0 0 1 10.1 1.9" stroke="#a0a0a0" stroke-width="1" fill="none"/><path d="M2.7 9.3A4.7 4.7 0 0 1 9.3 2.7" stroke="#696969" stroke-width="1" fill="none"/><path d="M10.1 1.9A5.8 5.8 0 0 1 1.9 10.1" stroke="#fff" stroke-width="1" fill="none"/><path d="M9.3 2.7A4.7 4.7 0 0 1 2.7 9.3" stroke="#e3e3e3" stroke-width="1" fill="none"/><circle cx="6" cy="6" r="2" fill="#000"/></svg><span class="t" style="left:191.4px;top:585px;font-size:12px;line-height:16px;color:#fff;transform:scaleX(0.8988);">aus</span><svg style="left:251px;top:586px" width="12" height="12" viewBox="0 0 12 12"><circle cx="6" cy="6" r="5.5" fill="#fff"/><path d="M1.9 10.1A5.8 5.8 0 0 1 10.1 1.9" stroke="#a0a0a0" stroke-width="1" fill="none"/><path d="M2.7 9.3A4.7 4.7 0 0 1 9.3 2.7" stroke="#696969" stroke-width="1" fill="none"/><path d="M10.1 1.9A5.8 5.8 0 0 1 1.9 10.1" stroke="#fff" stroke-width="1" fill="none"/><path d="M9.3 2.7A4.7 4.7 0 0 1 2.7 9.3" stroke="#e3e3e3" stroke-width="1" fill="none"/></svg><span class="t" style="left:267.2px;top:585px;font-size:12px;line-height:16px;color:#fff;transform:scaleX(0.8869);">links</span><svg style="left:328px;top:586px" width="12" height="12" viewBox="0 0 12 12"><circle cx="6" cy="6" r="5.5" fill="#fff"/><path d="M1.9 10.1A5.8 5.8 0 0 1 10.1 1.9" stroke="#a0a0a0" stroke-width="1" fill="none"/><path d="M2.7 9.3A4.7 4.7 0 0 1 9.3 2.7" stroke="#696969" stroke-width="1" fill="none"/><path d="M10.1 1.9A5.8 5.8 0 0 1 1.9 10.1" stroke="#fff" stroke-width="1" fill="none"/><path d="M9.3 2.7A4.7 4.7 0 0 1 2.7 9.3" stroke="#e3e3e3" stroke-width="1" fill="none"/></svg><span class="t" style="left:344.2px;top:585px;font-size:12px;line-height:16px;color:#fff;transform:scaleX(0.8964);">rechts</span><div style="left:456px;top:83px;width:2px;height:796px;background:#fff"></div><div style="left:458px;top:83px;width:3px;height:796px;background:#f0f0f0"></div><div style="left:461px;top:81px;width:1px;height:798px;background:#a0a0a0"></div><div style="left:462px;top:82px;width:1px;height:797px;background:#696969"></div>
<svg class="cv" width="1600" height="900" viewBox="0 0 1600 900" shape-rendering="crispEdges"><defs><clipPath id="cvclip"><rect x="463" y="83" width="1135" height="796"/></clipPath><clipPath id="wallclip"><polygon points="782.5,415.5 799.5,415.5 799.5,684.5 906.5,684.5 906.5,711.5 728.5,711.5 728.5,684.5 761.5,684.5"/></clipPath></defs><g clip-path="url(#cvclip)"><rect x="463" y="83" width="1135" height="796" fill="#fff"/><rect x="474" y="84" width="1" height="794" fill="#c0c0c0"/><rect x="463" y="89" width="1134" height="1" fill="#c0c0c0"/><rect x="503" y="84" width="1" height="794" fill="#c0c0c0"/><rect x="463" y="119" width="1134" height="1" fill="#c0c0c0"/><rect x="533" y="84" width="1" height="794" fill="#c0c0c0"/><rect x="463" y="149" width="1134" height="1" fill="#c0c0c0"/><rect x="563" y="84" width="1" height="794" fill="#c0c0c0"/><rect x="463" y="178" width="1134" height="1" fill="#c0c0c0"/><rect x="592" y="84" width="1" height="794" fill="#c0c0c0"/><rect x="463" y="208" width="1134" height="1" fill="#c0c0c0"/><rect x="622" y="84" width="1" height="794" fill="#c0c0c0"/><rect x="463" y="237" width="1134" height="1" fill="#c0c0c0"/><rect x="651" y="84" width="1" height="794" fill="#c0c0c0"/><rect x="463" y="267" width="1134" height="1" fill="#c0c0c0"/><rect x="681" y="84" width="1" height="794" fill="#c0c0c0"/><rect x="463" y="296" width="1134" height="1" fill="#c0c0c0"/><rect x="711" y="84" width="1" height="794" fill="#c0c0c0"/><rect x="463" y="326" width="1134" height="1" fill="#c0c0c0"/><rect x="740" y="84" width="1" height="794" fill="#c0c0c0"/><rect x="463" y="356" width="1134" height="1" fill="#c0c0c0"/><rect x="770" y="84" width="1" height="794" fill="#c0c0c0"/><rect x="463" y="385" width="1134" height="1" fill="#c0c0c0"/><rect x="829" y="84" width="1" height="794" fill="#c0c0c0"/><rect x="463" y="444" width="1134" height="1" fill="#c0c0c0"/><rect x="858" y="84" width="1" height="794" fill="#c0c0c0"/><rect x="463" y="474" width="1134" height="1" fill="#c0c0c0"/><rect x="888" y="84" width="1" height="794" fill="#c0c0c0"/><rect x="463" y="504" width="1134" height="1" fill="#c0c0c0"/><rect x="918" y="84" width="1" height="794" fill="#c0c0c0"/><rect x="463" y="533" width="1134" height="1" fill="#c0c0c0"/><rect x="947" y="84" width="1" height="794" fill="#c0c0c0"/><rect x="463" y="563" width="1134" height="1" fill="#c0c0c0"/><rect x="977" y="84" width="1" height="794" fill="#c0c0c0"/><rect x="463" y="592" width="1134" height="1" fill="#c0c0c0"/><rect x="1006" y="84" width="1" height="794" fill="#c0c0c0"/><rect x="463" y="622" width="1134" height="1" fill="#c0c0c0"/><rect x="1036" y="84" width="1" height="794" fill="#c0c0c0"/><rect x="463" y="651" width="1134" height="1" fill="#c0c0c0"/><rect x="1065" y="84" width="1" height="794" fill="#c0c0c0"/><rect x="463" y="681" width="1134" height="1" fill="#c0c0c0"/><rect x="1095" y="84" width="1" height="794" fill="#c0c0c0"/><rect x="463" y="711" width="1134" height="1" fill="#c0c0c0"/><rect x="1125" y="84" width="1" height="794" fill="#c0c0c0"/><rect x="463" y="740" width="1134" height="1" fill="#c0c0c0"/><rect x="1154" y="84" width="1" height="794" fill="#c0c0c0"/><rect x="463" y="770" width="1134" height="1" fill="#c0c0c0"/><rect x="1184" y="84" width="1" height="794" fill="#c0c0c0"/><rect x="463" y="799" width="1134" height="1" fill="#c0c0c0"/><rect x="1213" y="84" width="1" height="794" fill="#c0c0c0"/><rect x="463" y="829" width="1134" height="1" fill="#c0c0c0"/><rect x="1243" y="84" width="1" height="794" fill="#c0c0c0"/><rect x="463" y="858" width="1134" height="1" fill="#c0c0c0"/><rect x="1273" y="84" width="1" height="794" fill="#c0c0c0"/><rect x="1302" y="84" width="1" height="794" fill="#c0c0c0"/><rect x="1332" y="84" width="1" height="794" fill="#c0c0c0"/><rect x="1361" y="84" width="1" height="794" fill="#c0c0c0"/><rect x="1391" y="84" width="1" height="794" fill="#c0c0c0"/><rect x="1420" y="84" width="1" height="794" fill="#c0c0c0"/><rect x="1450" y="84" width="1" height="794" fill="#c0c0c0"/><rect x="1480" y="84" width="1" height="794" fill="#c0c0c0"/><rect x="1509" y="84" width="1" height="794" fill="#c0c0c0"/><rect x="1539" y="84" width="1" height="794" fill="#c0c0c0"/><rect x="1568" y="84" width="1" height="794" fill="#c0c0c0"/><rect x="799" y="84" width="1" height="794" fill="#ff0000"/><rect x="463" y="415" width="1134" height="1" fill="#ff0000"/><polygon points="669,711 799,711 799,416 1332,238 1391,238 1391,770 669,770" fill="#ffb266"/><path d="M803.4 424.8L809.8 412.1M810.7 411.8L823.4 418.2M801.1 420.2L804.2 413.9M808.3 415.0L818.2 419.9M806.6 418.4L813.0 421.6M824.3 417.9L830.7 405.1M831.5 404.8L844.3 411.2M820.3 416.6L825.1 407.0M816.9 414.9L819.9 408.7M829.2 408.0L839.1 412.9M827.5 411.5L833.9 414.7M845.2 410.9L851.5 398.1M852.4 397.8L865.2 404.2M841.1 409.6L845.9 400.0M837.7 407.9L840.8 401.7M850.1 401.0L860.0 406.0M848.3 404.5L854.7 407.7M866.0 403.9L872.4 391.2M873.3 390.9L886.0 397.2M862.0 402.6L866.8 393.0M858.6 400.9L861.7 394.7M870.9 394.1L880.8 399.0M869.2 397.5L875.6 400.7M886.9 397.0L893.3 384.2M894.1 383.9L906.9 390.3M882.9 395.7L887.7 386.1M879.5 394.0L882.6 387.8M891.8 387.1L901.7 392.0M890.1 390.6L896.5 393.8M907.8 390.0L914.1 377.2M915.0 376.9L927.8 383.3M903.7 388.7L908.5 379.1M900.3 387.0L903.4 380.8M912.7 380.1L922.6 385.1M910.9 383.6L917.3 386.8M928.6 383.0L935.0 370.2M935.9 370.0L948.6 376.3M924.6 381.7L929.4 372.1M921.2 380.0L924.3 373.8M933.6 373.2L943.4 378.1M931.8 376.6L938.2 379.8M949.5 376.1L955.9 363.3M956.7 363.0L969.5 369.4M945.5 374.8L950.3 365.1M942.1 373.1L945.2 366.9M954.4 366.2L964.3 371.1M952.7 369.7L959.1 372.9M970.4 369.1L976.7 356.3M977.6 356.0L990.4 362.4M966.3 367.8L971.1 358.2M962.9 366.1L966.0 359.9M975.3 359.2L985.2 364.1M973.5 362.7L979.9 365.9M991.2 362.1L997.6 349.3M998.5 349.1L1011.2 355.4M987.2 360.8L992.0 351.2M983.8 359.1L986.9 352.9M996.2 352.3L1006.0 357.2M994.4 355.7L1000.8 358.9M1012.1 355.2L1018.5 342.4M1019.3 342.1L1032.1 348.5M1008.1 353.9L1012.9 344.2M1004.7 352.2L1007.8 346.0M1017.0 345.3L1026.9 350.2M1015.3 348.8L1021.7 352.0M1033.0 348.2L1039.3 335.4M1040.2 335.1L1053.0 341.5M1028.9 346.9L1033.7 337.3M1025.5 345.2L1028.6 339.0M1037.9 338.3L1047.8 343.2M1036.1 341.8L1042.5 345.0M1053.8 341.2L1060.2 328.4M1061.1 328.1L1073.8 334.5M1049.8 339.9L1054.6 330.3M1046.4 338.2L1049.5 332.0M1058.8 331.3L1068.6 336.3M1057.0 334.8L1063.4 338.0M1074.7 334.2L1081.1 321.5M1081.9 321.2L1094.7 327.6M1070.7 333.0L1075.5 323.3M1067.3 331.2L1070.4 325.0M1079.6 324.4L1089.5 329.3M1077.9 327.9L1084.3 331.0M1095.6 327.3L1101.9 314.5M1102.8 314.2L1115.6 320.6M1091.5 326.0L1096.3 316.4M1088.1 324.3L1091.2 318.1M1100.5 317.4L1110.4 322.3M1098.8 320.9L1105.1 324.1M1116.4 320.3L1122.8 307.5M1123.7 307.2L1136.4 313.6M1112.4 319.0L1117.2 309.4M1109.0 317.3L1112.1 311.1M1121.4 310.4L1131.2 315.4M1119.6 313.9L1126.0 317.1M1137.3 313.3L1143.7 300.6M1144.5 300.3L1157.3 306.7M1133.3 312.0L1138.1 302.4M1129.9 310.3L1133.0 304.1M1142.2 303.5L1152.1 308.4M1140.5 306.9L1146.9 310.1M1158.2 306.4L1164.5 293.6M1165.4 293.3L1178.2 299.7M1154.1 305.1L1158.9 295.5M1150.7 303.4L1153.8 297.2M1163.1 296.5L1173.0 301.4M1161.4 300.0L1167.7 303.2M1179.0 299.4L1185.4 286.6M1186.3 286.3L1199.0 292.7M1175.0 298.1L1179.8 288.5M1171.6 296.4L1174.7 290.2M1184.0 289.5L1193.8 294.5M1182.2 293.0L1188.6 296.2M1199.9 292.4L1206.3 279.7M1207.1 279.4L1219.9 285.7M1195.9 291.1L1200.7 281.5M1192.5 289.4L1195.6 283.2M1204.8 282.6L1214.7 287.5M1203.1 286.0L1209.5 289.2M1220.8 285.5L1227.1 272.7M1228.0 272.4L1240.8 278.8M1216.7 284.2L1221.5 274.6M1213.3 282.5L1216.4 276.3M1225.7 275.6L1235.6 280.5M1224.0 279.1L1230.3 282.3M1241.6 278.5L1248.0 265.7M1248.9 265.4L1261.6 271.8M1237.6 277.2L1242.4 267.6M1234.2 275.5L1237.3 269.3M1246.6 268.6L1256.4 273.6M1244.8 272.1L1251.2 275.3M1262.5 271.5L1268.9 258.7M1269.7 258.5L1282.5 264.8M1258.5 270.2L1263.3 260.6M1255.1 268.5L1258.2 262.3M1267.4 261.7L1277.3 266.6M1265.7 265.1L1272.1 268.3M1283.4 264.6L1289.7 251.8M1290.6 251.5L1303.4 257.9M1279.3 263.3L1284.1 253.6M1275.9 261.6L1279.0 255.4M1288.3 254.7L1298.2 259.6M1286.6 258.2L1292.9 261.4M1304.2 257.6L1310.6 244.8M1311.5 244.5L1324.2 250.9M1300.2 256.3L1305.0 246.7M1296.8 254.6L1299.9 248.4M1309.2 247.7L1319.0 252.6M1307.4 251.2L1313.8 254.4M1325.1 250.6L1331.5 237.8M1332.3 237.6L1332.6 237.7M1321.1 249.3L1325.9 239.7M1317.7 247.6L1320.8 241.4M1330.0 240.8L1334.3 242.9M1328.3 244.2L1334.7 247.4" stroke="#008000" stroke-width="1" fill="none"/><path d="M1339.2 237.5L1349.3 247.6M1332.6 237.5L1342.7 247.6M1332.5 242.7L1337.4 247.6M1350.2 247.6L1360.3 237.5M1361.2 237.5L1371.3 247.6M1346.8 245.1L1354.4 237.5M1344.1 242.4L1349.0 237.5M1358.0 239.8L1365.8 247.6M1355.2 242.6L1360.3 247.6M1372.2 247.6L1382.3 237.5M1383.2 237.5L1391.5 245.8M1368.8 245.1L1376.4 237.5M1366.1 242.4L1371.0 237.5M1380.0 239.8L1387.8 247.6M1377.2 242.6L1382.3 247.6M1390.8 245.1L1391.5 244.4M1388.1 242.4L1391.5 239.0" stroke="#008000" stroke-width="0.8" fill="none"/><path d="M799.5 415.5L1332.5 237.5L1391.5 237.5" stroke="#008000" stroke-width="1" fill="none"/><path d="M676.2 711.5L686.3 721.6M669.6 711.5L679.7 721.6M669.5 716.7L674.4 721.6M687.2 721.6L697.3 711.5M698.2 711.5L708.3 721.6M683.8 719.1L691.4 711.5M681.1 716.4L686.0 711.5M695.0 713.8L702.8 721.6M692.2 716.5L697.3 721.6M709.2 721.6L719.3 711.5M720.2 711.5L728.5 719.8M705.8 719.1L713.4 711.5M703.1 716.4L708.0 711.5M717.0 713.8L724.8 721.6M714.2 716.5L719.3 721.6M727.8 719.1L728.5 718.4M725.1 716.4L728.5 713.0" stroke="#808000" stroke-width="0.8" fill="none"/><rect x="669" y="711" width="60" height="1" fill="#808000"/><path d="M799.5 365V402M795 401.5H805M812.5 365V402M808 401.5H818M824.5 365V402M820 401.5H830M837.5 365V402M833 401.5H843M849.5 365V402M845 401.5H855M862.5 365V402M858 401.5H868M875.5 365V402M871 401.5H881M887.5 365V402M883 401.5H893M900.5 365V402M896 401.5H906M912.5 365V402M908 401.5H918M925.5 365V402M921 401.5H931M938.5 365V402M934 401.5H944M950.5 365V402M946 401.5H956M963.5 365V402M959 401.5H969M975.5 365V402M971 401.5H981M988.5 365V402M984 401.5H994M1001.5 365V402M997 401.5H1007M1013.5 365V402M1009 401.5H1019M1026.5 365V402M1022 401.5H1032M1038.5 365V402M1034 401.5H1044M1051.5 365V402M1047 401.5H1057M1064.5 365V402M1060 401.5H1070M1076.5 365V402M1072 401.5H1082M1089.5 365V402M1085 401.5H1095M1101.5 365V402M1097 401.5H1107M1114.5 365V402M1110 401.5H1120M1127.5 365V402M1123 401.5H1133M1139.5 365V402M1135 401.5H1145M1152.5 365V402M1148 401.5H1158M1164.5 365V402M1160 401.5H1170M1177.5 365V402M1173 401.5H1183M1190.5 365V402M1186 401.5H1196M1202.5 365V402M1198 401.5H1208M1215.5 365V402M1211 401.5H1221M1227.5 365V402M1223 401.5H1233M1240.5 365V402M1236 401.5H1246M1253.5 365V402M1249 401.5H1259M1265.5 365V402M1261 401.5H1271M1278.5 365V402M1274 401.5H1284M1290.5 365V402M1286 401.5H1296M1303.5 365V402M1299 401.5H1309M1316.5 365V402M1312 401.5H1322M1328.5 365V402M1324 401.5H1334M1341.5 365V402M1337 401.5H1347M1353.5 365V402M1349 401.5H1359M1366.5 365V402M1362 401.5H1372M1379.5 365V402M1375 401.5H1385M1391.5 365V402M1387 401.5H1397" stroke="#0000ff" stroke-width="1" fill="none"/><path d="M795.2 402L799.4 415M803.8 402L799.6 415M808.2 402L812.4 415M816.8 402L812.6 415M820.2 402L824.4 415M828.8 402L824.6 415M833.2 402L837.4 415M841.8 402L837.6 415M845.2 402L849.4 415M853.8 402L849.6 415M858.2 402L862.4 415M866.8 402L862.6 415M871.2 402L875.4 415M879.8 402L875.6 415M883.2 402L887.4 415M891.8 402L887.6 415M896.2 402L900.4 415M904.8 402L900.6 415M908.2 402L912.4 415M916.8 402L912.6 415M921.2 402L925.4 415M929.8 402L925.6 415M934.2 402L938.4 415M942.8 402L938.6 415M946.2 402L950.4 415M954.8 402L950.6 415M959.2 402L963.4 415M967.8 402L963.6 415M971.2 402L975.4 415M979.8 402L975.6 415M984.2 402L988.4 415M992.8 402L988.6 415M997.2 402L1001.4 415M1005.8 402L1001.6 415M1009.2 402L1013.4 415M1017.8 402L1013.6 415M1022.2 402L1026.4 415M1030.8 402L1026.6 415M1034.2 402L1038.4 415M1042.8 402L1038.6 415M1047.2 402L1051.4 415M1055.8 402L1051.6 415M1060.2 402L1064.4 415M1068.8 402L1064.6 415M1072.2 402L1076.4 415M1080.8 402L1076.6 415M1085.2 402L1089.4 415M1093.8 402L1089.6 415M1097.2 402L1101.4 415M1105.8 402L1101.6 415M1110.2 402L1114.4 415M1118.8 402L1114.6 415M1123.2 402L1127.4 415M1131.8 402L1127.6 415M1135.2 402L1139.4 415M1143.8 402L1139.6 415M1148.2 402L1152.4 415M1156.8 402L1152.6 415M1160.2 402L1164.4 415M1168.8 402L1164.6 415M1173.2 402L1177.4 415M1181.8 402L1177.6 415M1186.2 402L1190.4 415M1194.8 402L1190.6 415M1198.2 402L1202.4 415M1206.8 402L1202.6 415M1211.2 402L1215.4 415M1219.8 402L1215.6 415M1223.2 402L1227.4 415M1231.8 402L1227.6 415M1236.2 402L1240.4 415M1244.8 402L1240.6 415M1249.2 402L1253.4 415M1257.8 402L1253.6 415M1261.2 402L1265.4 415M1269.8 402L1265.6 415M1274.2 402L1278.4 415M1282.8 402L1278.6 415M1286.2 402L1290.4 415M1294.8 402L1290.6 415M1299.2 402L1303.4 415M1307.8 402L1303.6 415M1312.2 402L1316.4 415M1320.8 402L1316.6 415M1324.2 402L1328.4 415M1332.8 402L1328.6 415M1337.2 402L1341.4 415M1345.8 402L1341.6 415M1349.2 402L1353.4 415M1357.8 402L1353.6 415M1362.2 402L1366.4 415M1370.8 402L1366.6 415M1375.2 402L1379.4 415M1383.8 402L1379.6 415M1387.2 402L1391.4 415M1395.8 402L1391.6 415" stroke="#0000ff" stroke-width="1" fill="none"/><rect x="799" y="365" width="593" height="1" fill="#0000ff"/><rect x="799" y="415" width="593" height="1" fill="#0000ff"/><rect x="1396" y="365" width="5" height="1" fill="#0000ff"/><rect x="669" y="706" width="60" height="1" fill="#0000ff"/><rect x="669" y="706" width="1" height="5" fill="#0000ff"/><rect x="674" y="706" width="1" height="5" fill="#0000ff"/><rect x="679" y="706" width="1" height="5" fill="#0000ff"/><rect x="684" y="706" width="1" height="5" fill="#0000ff"/><rect x="689" y="706" width="1" height="5" fill="#0000ff"/><rect x="694" y="706" width="1" height="5" fill="#0000ff"/><rect x="699" y="706" width="1" height="5" fill="#0000ff"/><rect x="704" y="706" width="1" height="5" fill="#0000ff"/><rect x="709" y="706" width="1" height="5" fill="#0000ff"/><rect x="714" y="706" width="1" height="5" fill="#0000ff"/><rect x="719" y="706" width="1" height="5" fill="#0000ff"/><rect x="724" y="706" width="1" height="5" fill="#0000ff"/><polygon points="782.5,415.5 799.5,415.5 799.5,684.5 906.5,684.5 906.5,711.5 728.5,711.5 728.5,684.5 761.5,684.5" fill="#c0c0c0" stroke="#000" stroke-width="1"/><g clip-path="url(#wallclip)"><path d="M63.5 800.5L563.5 300.5M93.5 800.5L593.5 300.5M122.5 800.5L622.5 300.5M152.5 800.5L652.5 300.5M181.5 800.5L681.5 300.5M211.5 800.5L711.5 300.5M241.5 800.5L741.5 300.5M270.5 800.5L770.5 300.5M300.5 800.5L800.5 300.5M329.5 800.5L829.5 300.5M359.5 800.5L859.5 300.5M389.5 800.5L889.5 300.5M418.5 800.5L918.5 300.5M448.5 800.5L948.5 300.5M477.5 800.5L977.5 300.5M507.5 800.5L1007.5 300.5M537.5 800.5L1037.5 300.5M566.5 800.5L1066.5 300.5M596.5 800.5L1096.5 300.5M625.5 800.5L1125.5 300.5M655.5 800.5L1155.5 300.5M685.5 800.5L1185.5 300.5M714.5 800.5L1214.5 300.5M744.5 800.5L1244.5 300.5M773.5 800.5L1273.5 300.5M803.5 800.5L1303.5 300.5M833.5 800.5L1333.5 300.5M862.5 800.5L1362.5 300.5" stroke="#000" stroke-width="0.72" fill="none"/><path d="M78.5 800.5L578.5 300.5M107.5 800.5L607.5 300.5M137.5 800.5L637.5 300.5M167.5 800.5L667.5 300.5M196.5 800.5L696.5 300.5M226.5 800.5L726.5 300.5M255.5 800.5L755.5 300.5M285.5 800.5L785.5 300.5M315.5 800.5L815.5 300.5M344.5 800.5L844.5 300.5M374.5 800.5L874.5 300.5M403.5 800.5L903.5 300.5M433.5 800.5L933.5 300.5M463.5 800.5L963.5 300.5M492.5 800.5L992.5 300.5M522.5 800.5L1022.5 300.5M551.5 800.5L1051.5 300.5M581.5 800.5L1081.5 300.5M611.5 800.5L1111.5 300.5M640.5 800.5L1140.5 300.5M670.5 800.5L1170.5 300.5M699.5 800.5L1199.5 300.5M729.5 800.5L1229.5 300.5M759.5 800.5L1259.5 300.5M788.5 800.5L1288.5 300.5M818.5 800.5L1318.5 300.5M847.5 800.5L1347.5 300.5M877.5 800.5L1377.5 300.5" stroke="#000" stroke-width="0.72" stroke-dasharray="9.9 2.83" stroke-dashoffset="3" fill="none"/></g><rect x="727" y="683" width="2" height="2" fill="#000"/><rect x="760" y="683" width="2" height="2" fill="#000"/><rect x="798" y="683" width="2" height="2" fill="#000"/><rect x="905" y="683" width="2" height="2" fill="#000"/><rect x="727" y="710" width="2" height="2" fill="#000"/><rect x="905" y="710" width="2" height="2" fill="#000"/><rect x="781" y="414" width="2" height="2" fill="#000"/><rect x="1331" y="236" width="2" height="2" fill="#000"/><rect x="1390" y="236" width="2" height="2" fill="#000"/><rect x="668" y="710" width="2" height="2" fill="#000"/></g></svg>
<svg width="0" height="0" style="left:0;top:0"><defs><linearGradient id="bg1" x1="0" y1="0" x2="0" y2="1"><stop offset="0" stop-color="#ffffff"/><stop offset="0.12" stop-color="#fbfaf9"/><stop offset="0.6" stop-color="#e6e2dd"/><stop offset="1" stop-color="#cdc5bc"/></linearGradient><pattern id="ph" width="2" height="4" patternUnits="userSpaceOnUse"><rect width="2" height="4" fill="#eaa4a9"/><rect x="0" y="1" width="1" height="1" fill="#fcf2f2"/><rect x="1" y="1" width="1" height="1" fill="#d8525c"/><rect x="0" y="3" width="1" height="1" fill="#d8525c"/><rect x="1" y="3" width="1" height="1" fill="#fcf2f2"/></pattern><pattern id="ph2" width="2" height="2" patternUnits="userSpaceOnUse"><rect width="2" height="2" fill="#7a1418"/><rect width="1" height="1" fill="#3a0a0c"/><rect x="1" y="1" width="1" height="1" fill="#3a0a0c"/></pattern></defs></svg><div style="left:1086px;top:379px;width:508px;height:498px;background:linear-gradient(135deg,#8a8a8a 0,#8a8a8a 50%,#7c6a58 50%,#7c6a58 100%)"></div><div style="left:1087px;top:380px;width:506px;height:30px;background:#fff"></div><div style="left:1087px;top:410px;width:506px;height:466px;background:#003f70"></div><span class="t" style="left:1094.7px;top:387px;font-size:12px;line-height:16px;color:#000;transform:scaleX(0.9851);">Projekt DC-Winkel bearbeiten:</span><svg style="left:1570px;top:386px" width="16" height="16" viewBox="0 0 16 16"><path d="M3 3L13 13M13 3L3 13" stroke="#000" stroke-width="1.1" fill="none"/></svg><div class="rais" style="left:1098px;top:421px;width:110px;height:19px;background:#f0f0f0;"></div><span class="t" style="left:1103.2px;top:424px;font-size:12px;line-height:16px;color:#000;transform:scaleX(0.8744);">Neues (leeres) Projekt</span><div class="rais" style="left:1221px;top:421px;width:110px;height:19px;background:#f0f0f0;"></div><span class="t" style="left:1245.1px;top:424px;font-size:12px;line-height:16px;color:#000;transform:scaleX(0.8967);">Projekt öffnen</span><div class="rais" style="left:1344px;top:421px;width:110px;height:19px;background:#f0f0f0;"></div><span class="t" style="left:1374.5px;top:424px;font-size:12px;line-height:16px;color:#000;transform:scaleX(0.9148);">Abbrechen</span><div class="rais" style="left:1467px;top:421px;width:110px;height:19px;background:#f0f0f0;"></div><span class="t" style="left:1513.0px;top:424px;font-size:12px;line-height:16px;color:#000;transform:scaleX(0.8994);">Hilfe</span><span class="t" style="left:1097.9px;top:450px;font-size:12px;line-height:16px;color:#fff;transform:scaleX(0.8869);">Standard-Typen:</span><svg style="left:1098px;top:472px" width="157" height="104" viewBox="0 0 157 104"><rect x="0" y="0" width="157" height="104" fill="#fff"/><rect x="3" y="3" width="151" height="98" fill="url(#bg1)"/><path d="M157 0V104H0L3 101H154V3Z" fill="#8a8680"/><path d="M155 2V102H2L3 101H154V3Z" fill="#747474"/><rect x="9.4" y="75.0" width="137.2" height="22.400000000000013" fill="#d6e9e0"/><rect x="10" y="75.6" width="136" height="21.200000000000003" fill="#cc242c"/><rect x="61" y="12.6" width="85" height="84.2" fill="#cc242c"/><rect x="61" y="14.2" width="85" height="53.8" fill="#e05a62"/><rect x="61" y="13" width="85" height="1.2" fill="#cc1018"/><polygon points="61,14.2 130.70000000000002,14.2 94.2,87.6 61,87.6" fill="url(#ph)"/><path d="M49.3 13H61V75.4H93.4V87.6H30V75.4H49.3Z" fill="#451414"/></svg><svg style="left:1260px;top:472px" width="157" height="104" viewBox="0 0 157 104"><rect x="0" y="0" width="157" height="104" fill="#fff"/><rect x="3" y="3" width="151" height="98" fill="url(#bg1)"/><path d="M157 0V104H0L3 101H154V3Z" fill="#8a8680"/><path d="M155 2V102H2L3 101H154V3Z" fill="#747474"/><rect x="9.4" y="77.0" width="137.2" height="20.400000000000013" fill="#d6e9e0"/><rect x="10" y="77.6" width="136" height="19.200000000000003" fill="#cc242c"/><rect x="65" y="12.6" width="81" height="84.2" fill="#cc242c"/><rect x="65" y="14.2" width="81" height="53.8" fill="#e05a62"/><rect x="65" y="13" width="81" height="1.2" fill="#cc1018"/><polygon points="65,14.2 136.6,14.2 100.8,87.8 100,80.6 62,73.7" fill="url(#ph)"/><path d="M54.8 13H65L62 73.7L100 80.6V87.8L30 85.2V78.2L49.6 73.7Z" fill="#451414"/></svg><svg style="left:1422px;top:472px" width="157" height="104" viewBox="0 0 157 104"><rect x="0" y="0" width="157" height="104" fill="#fff"/><rect x="3" y="3" width="151" height="98" fill="url(#bg1)"/><path d="M157 0V104H0L3 101H154V3Z" fill="#8a8680"/><path d="M155 2V102H2L3 101H154V3Z" fill="#747474"/><rect x="9.4" y="77.0" width="137.2" height="20.400000000000013" fill="#d6e9e0"/><rect x="10" y="77.6" width="136" height="19.200000000000003" fill="#cc242c"/><rect x="65" y="12.6" width="81" height="84.2" fill="#cc242c"/><rect x="65" y="14.2" width="81" height="53.8" fill="#e05a62"/><rect x="65" y="13" width="81" height="1.2" fill="#cc1018"/><polygon points="65,14.2 136.6,14.2 100.8,87.8 100,80.6 62,73.7" fill="url(#ph)"/><path d="M54.6 13H64.8C60.6 26 59.6 44 62.2 73.7L100 80.6V87.8L30 85.2V78.2L49.4 73.7C46.8 52 47.6 28 54.6 13Z" fill="#451414"/></svg><svg style="left:1098px;top:599px" width="157" height="104" viewBox="0 0 157 104"><rect x="0" y="0" width="157" height="104" fill="#fff"/><rect x="3" y="3" width="151" height="98" fill="url(#bg1)"/><path d="M157 0V104H0L3 101H154V3Z" fill="#8a8680"/><path d="M155 2V102H2L3 101H154V3Z" fill="#747474"/><rect x="9.4" y="77.0" width="137.2" height="20.400000000000013" fill="#d6e9e0"/><rect x="10" y="77.6" width="136" height="19.200000000000003" fill="#cc242c"/><rect x="65" y="12.6" width="81" height="84.2" fill="#cc242c"/><rect x="65" y="14.2" width="81" height="53.8" fill="#e05a62"/><rect x="65" y="13" width="81" height="1.2" fill="#cc1018"/><polygon points="65,14.2 136.6,14.2 100.8,87.8 100,80.6 62,73.7" fill="url(#ph)"/><path d="M54.8 13H65L62 73.7L100 80.6V87.8L30 85.2V78.2L49.6 73.7Z" fill="#451414"/><path d="M62 28.2L92 30.4V36.8H62Z" fill="#451414"/></svg><svg style="left:1260px;top:599px" width="157" height="104" viewBox="0 0 157 104"><rect x="0" y="0" width="157" height="104" fill="#fff"/><rect x="3" y="3" width="151" height="98" fill="url(#bg1)"/><path d="M157 0V104H0L3 101H154V3Z" fill="#8a8680"/><path d="M155 2V102H2L3 101H154V3Z" fill="#747474"/><rect x="9.4" y="77.0" width="137.2" height="20.400000000000013" fill="#d6e9e0"/><rect x="10" y="77.6" width="136" height="19.200000000000003" fill="#cc242c"/><rect x="65" y="12.6" width="81" height="84.2" fill="#cc242c"/><rect x="65" y="14.2" width="81" height="53.8" fill="#e05a62"/><rect x="65" y="13" width="81" height="1.2" fill="#cc1018"/><polygon points="65,14.2 136.6,14.2 100.8,87.8 100,80.6 62,73.7" fill="url(#ph)"/><path d="M54.8 13H65L62 73.7L100 80.6V87.8L30 85.2V78.2L49.6 73.7Z" fill="#451414"/><path d="M62 28.2L92 30.4V36.8H62Z" fill="#451414"/><path d="M60 51L95 53.4V60.8H60Z" fill="#451414"/></svg><svg style="left:1422px;top:599px" width="157" height="104" viewBox="0 0 157 104"><rect x="0" y="0" width="157" height="104" fill="#fff"/><rect x="3" y="3" width="151" height="98" fill="url(#bg1)"/><path d="M157 0V104H0L3 101H154V3Z" fill="#8a8680"/><path d="M155 2V102H2L3 101H154V3Z" fill="#747474"/><rect x="9.4" y="77.0" width="137.2" height="20.400000000000013" fill="#d6e9e0"/><rect x="10" y="77.6" width="136" height="19.200000000000003" fill="#cc242c"/><rect x="65" y="12.6" width="81" height="84.2" fill="#cc242c"/><rect x="65" y="14.2" width="81" height="53.8" fill="#e05a62"/><rect x="65" y="13" width="81" height="1.2" fill="#cc1018"/><polygon points="65,14.2 136.6,14.2 100.8,87.8 100,80.6 62,73.7" fill="url(#ph)"/><path d="M54.6 13H64.8C60.6 26 59.6 44 62.2 73.7L100 80.6V87.8L30 85.2V78.2L49.4 73.7C46.8 52 47.6 28 54.6 13Z" fill="#451414"/><path d="M62 28.2L92 30.4V36.8H62Z" fill="#451414"/><path d="M60 51L95 53.4V60.8H60Z" fill="#451414"/></svg><span class="t" style="left:1128.5px;top:578px;font-size:12px;line-height:16px;color:#fff;transform:scaleX(0.9278);">Senkrechte Wand</span><span class="t" style="left:1298.5px;top:578px;font-size:12px;line-height:16px;color:#fff;transform:scaleX(0.9260);">Schräge Wand</span><span class="t" style="left:1439.5px;top:578px;font-size:12px;line-height:16px;color:#fff;transform:scaleX(0.9162);">Wand mit Knickpunkten</span><span class="t" style="left:1120.0px;top:705px;font-size:12px;line-height:16px;color:#fff;transform:scaleX(0.8894);">Senkrecht mit 1 Sporn</span><span class="t" style="left:1283.5px;top:705px;font-size:12px;line-height:16px;color:#fff;transform:scaleX(0.8883);">Schräg mit 2 Spornen</span><span class="t" style="left:1438.5px;top:705px;font-size:12px;line-height:16px;color:#fff;transform:scaleX(0.9087);">Knickpunkte + 2 Sporne</span><div style="left:1098px;top:736px;width:7px;height:1px;background:#e6e0da"></div><div style="left:1099px;top:737px;width:6px;height:1px;background:#fff"></div><div style="left:1191px;top:736px;width:4px;height:1px;background:#e6e0da"></div><div style="left:1191px;top:737px;width:3px;height:1px;background:#fff"></div><div style="left:1098px;top:736px;width:1px;height:76px;background:#e6e0da"></div><div style="left:1099px;top:737px;width:1px;height:74px;background:#fff"></div><div style="left:1099px;top:811px;width:96px;height:1px;background:#e6e0da"></div><div style="left:1194px;top:737px;width:1px;height:75px;background:#e6e0da"></div><div style="left:1098px;top:812px;width:98px;height:1px;background:#fff"></div><div style="left:1195px;top:736px;width:1px;height:77px;background:#fff"></div><div class="sunk" style="left:1105px;top:731px;width:9px;height:9px;background:#fff"></div><span class="t" style="left:1122.5px;top:730px;font-size:12px;line-height:16px;color:#fff;transform:scaleX(0.8937);">Vertikalsporn</span><svg style="left:1107px;top:755px" width="80" height="50" viewBox="0 0 80 50"><rect width="80" height="50" fill="#fff"/><rect x="3" y="3" width="74" height="44" fill="url(#bg1)"/><path d="M80 0V50H0L3 47.4H77.4V3Z" fill="#808080"/><path d="M11 8.2H18.2V5H31.8V8.2H69V20.7H11Z" fill="url(#ph)" stroke="#e0525c" stroke-width="0.6"/><rect x="54.4" y="20.8" width="14.6" height="22" fill="url(#ph2)" stroke="#d02030" stroke-width="0.8"/></svg><div style="left:1233px;top:736px;width:9px;height:1px;background:#e6e0da"></div><div style="left:1234px;top:737px;width:8px;height:1px;background:#fff"></div><div style="left:1323px;top:736px;width:7px;height:1px;background:#e6e0da"></div><div style="left:1323px;top:737px;width:6px;height:1px;background:#fff"></div><div style="left:1233px;top:736px;width:1px;height:76px;background:#e6e0da"></div><div style="left:1234px;top:737px;width:1px;height:74px;background:#fff"></div><div style="left:1234px;top:811px;width:96px;height:1px;background:#e6e0da"></div><div style="left:1329px;top:737px;width:1px;height:75px;background:#e6e0da"></div><div style="left:1233px;top:812px;width:98px;height:1px;background:#fff"></div><div style="left:1330px;top:736px;width:1px;height:77px;background:#fff"></div><div class="sunk" style="left:1242px;top:731px;width:9px;height:9px;background:#fff"></div><span class="t" style="left:1259.9px;top:730px;font-size:12px;line-height:16px;color:#fff;transform:scaleX(0.9055);">Spundwand</span><svg style="left:1242px;top:755px" width="80" height="50" viewBox="0 0 80 50"><rect width="80" height="50" fill="#fff"/><rect x="3" y="3" width="74" height="44" fill="url(#bg1)"/><path d="M80 0V50H0L3 47.4H77.4V3Z" fill="#808080"/><path d="M11.2 8.2H18.4V5H32V8.2H69.2V20H11.2Z" fill="url(#ph)" stroke="#e0525c" stroke-width="0.6"/><rect x="49.6" y="14.4" width="4.8" height="28.6" fill="#451414"/></svg><div style="left:1360px;top:736px;width:8px;height:1px;background:#e6e0da"></div><div style="left:1361px;top:737px;width:7px;height:1px;background:#fff"></div><div style="left:1455px;top:736px;width:2px;height:1px;background:#e6e0da"></div><div style="left:1455px;top:737px;width:1px;height:1px;background:#fff"></div><div style="left:1360px;top:736px;width:1px;height:76px;background:#e6e0da"></div><div style="left:1361px;top:737px;width:1px;height:74px;background:#fff"></div><div style="left:1361px;top:811px;width:96px;height:1px;background:#e6e0da"></div><div style="left:1456px;top:737px;width:1px;height:75px;background:#e6e0da"></div><div style="left:1360px;top:812px;width:98px;height:1px;background:#fff"></div><div style="left:1457px;top:736px;width:1px;height:77px;background:#fff"></div><div class="sunk" style="left:1368px;top:731px;width:9px;height:9px;background:#fff"></div><span class="t" style="left:1385.5px;top:730px;font-size:12px;line-height:16px;color:#fff;transform:scaleX(0.8869);">Vormauerung</span><svg style="left:1369px;top:755px" width="80" height="50" viewBox="0 0 80 50"><rect width="80" height="50" fill="#fff"/><rect x="3" y="3" width="74" height="44" fill="url(#bg1)"/><path d="M80 0V50H0L3 47.4H77.4V3Z" fill="#808080"/><path d="M36.6 8.2H43L41.6 32.4L62.6 35.6V42.8H17.4V35.6L31 32.4Z" fill="url(#ph)" stroke="#e0525c" stroke-width="0.6"/><path d="M33.2 8.2H36.8L30.4 31.6H27Z" fill="#451414"/></svg><div style="left:1485px;top:736px;width:9px;height:1px;background:#e6e0da"></div><div style="left:1486px;top:737px;width:8px;height:1px;background:#fff"></div><div style="left:1576px;top:736px;width:6px;height:1px;background:#e6e0da"></div><div style="left:1576px;top:737px;width:5px;height:1px;background:#fff"></div><div style="left:1485px;top:736px;width:1px;height:76px;background:#e6e0da"></div><div style="left:1486px;top:737px;width:1px;height:74px;background:#fff"></div><div style="left:1486px;top:811px;width:96px;height:1px;background:#e6e0da"></div><div style="left:1581px;top:737px;width:1px;height:75px;background:#e6e0da"></div><div style="left:1485px;top:812px;width:98px;height:1px;background:#fff"></div><div style="left:1582px;top:736px;width:1px;height:77px;background:#fff"></div><div class="sunk" style="left:1494px;top:731px;width:9px;height:9px;background:#fff"></div><span class="t" style="left:1511.5px;top:730px;font-size:12px;line-height:16px;color:#fff;transform:scaleX(0.9087);">Auskragung</span><svg style="left:1494px;top:755px" width="80" height="50" viewBox="0 0 80 50"><rect width="80" height="50" fill="#fff"/><rect x="3" y="3" width="74" height="44" fill="url(#bg1)"/><path d="M80 0V50H0L3 47.4H77.4V3Z" fill="#808080"/><path d="M36.4 8.2H42.8L41.4 32.4L62.8 35.6V42.8H17.2V35.6L30.8 32.4Z" fill="url(#ph)" stroke="#e0525c" stroke-width="0.6"/><path d="M22.8 4.2H28.8V9.6L35.4 16L34 21.4L22.8 11Z" fill="#451414"/></svg><span class="t" style="left:1097.5px;top:827px;font-size:12px;line-height:16px;color:#fff;transform:scaleX(0.8868);">Zuletzt bearbeitete Projekte:</span><div class="sunk" style="left:1098px;top:847px;width:481px;height:17px;background:#fff"></div><div style="left:1564px;top:849px;width:13px;height:13px;background:#f0f0f0;border:1px solid;border-color:#fff #696969 #696969 #fff;padding:1px;box-shadow:inset -1px -1px 0 #a0a0a0"></div><svg style="left:1564px;top:849px" width="17" height="17" viewBox="0 0 17 17" shape-rendering="crispEdges"><path d="M5 7H12L8.5 10.5Z" fill="#000"/></svg>
<div style="left:0px;top:880px;width:1600px;height:20px;background:#f0f0f0"></div><div style="left:40px;top:878px;width:1560px;height:2px;background:#fff"></div><div style="left:0px;top:878px;width:40px;height:1px;background:#8a8680"></div><div style="left:0px;top:879px;width:40px;height:1px;background:#fff"></div><div style="left:0px;top:898px;width:1600px;height:1px;background:#fafafa"></div><span class="t" style="left:2.7px;top:883px;font-size:12px;line-height:16px;color:#000;transform:scaleX(1.0129);">Drücken Sie F1, um Hilfe zu erhalten.</span><div style="left:1394px;top:882px;width:19px;height:15px;border:1px solid;border-color:#a0a0a0 #fff #fff #a0a0a0"></div><div style="left:1418px;top:882px;width:31px;height:15px;border:1px solid;border-color:#a0a0a0 #fff #fff #a0a0a0"></div><div style="left:1454px;top:882px;width:19px;height:15px;border:1px solid;border-color:#a0a0a0 #fff #fff #a0a0a0"></div><div style="left:1478px;top:882px;width:54px;height:15px;border:1px solid;border-color:#a0a0a0 #fff #fff #a0a0a0"></div><div style="left:1537px;top:882px;width:41px;height:15px;border:1px solid;border-color:#a0a0a0 #fff #fff #a0a0a0"></div><span class="t" style="left:1419.9px;top:883px;font-size:12px;line-height:16px;color:#000;transform:scaleX(0.9953);">NUM</span><span class="t" style="left:1479.7px;top:883px;font-size:12px;line-height:16px;color:#000;transform:scaleX(1.0231);">06.03.23</span><span class="t" style="left:1539.3px;top:883px;font-size:12px;line-height:16px;color:#000;transform:scaleX(1.0323);">12:13</span><svg style="left:1584px;top:885px" width="14" height="14" viewBox="0 0 14 14"><path d="M3 13.5L13.5 3M7 13.5L13.5 7M11 13.5L13.5 11" stroke="#a0a0a0" stroke-width="1.2"/><path d="M4 13.5L13.5 4M8 13.5L13.5 8M12 13.5L13.5 12" stroke="#fff" stroke-width="1"/></svg>
<div style="left:0px;top:1px;width:1px;height:899px;background:linear-gradient(#1f2d45,#15253a 60px,#101c2c)"></div><div style="left:1599px;top:0px;width:1px;height:900px;background:#595d66"></div><div style="left:1598px;top:83px;width:1px;height:796px;background:#e3e3e3"></div><div style="left:0px;top:899px;width:1600px;height:1px;background:#3a4454"></div>
</body></html>
